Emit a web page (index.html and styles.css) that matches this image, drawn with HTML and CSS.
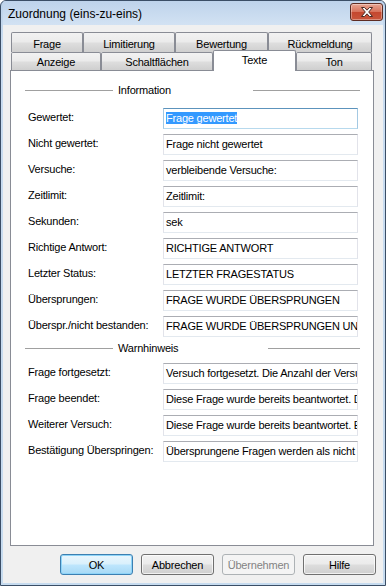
FILE: index.html
```html
<!DOCTYPE html>
<html lang="de">
<head>
<meta charset="utf-8">
<title>Zuordnung (eins-zu-eins)</title>
<link rel="stylesheet" href="styles.css">
</head>
<body>
<div class="window">
  <div class="titlebar">
    <span class="title">Zuordnung (eins-zu-eins)</span>
    <div class="close">
      <svg width="14" height="10" viewBox="0 0 14 10">
        <path d="M1.5 0.5 H4.5 L7 3.2 L9.5 0.5 H12.5 L8.7 5 L12.5 9.5 H9.5 L7 6.8 L4.5 9.5 H1.5 L5.3 5 Z" fill="#ffffff" stroke="#4a2a24" stroke-width="1" stroke-linejoin="round"/>
      </svg>
    </div>
  </div>
  <div class="body">
    <div class="tabs">
      <div class="tabrow back">
        <div class="tab t-frage">Frage</div>
        <div class="tab t-limit">Limitierung</div>
        <div class="tab t-bew">Bewertung</div>
        <div class="tab t-rueck">Rückmeldung</div>
      </div>
      <div class="tabrow front">
        <div class="tab t-anz">Anzeige</div>
        <div class="tab t-schalt">Schaltflächen</div>
        <div class="tab t-texte active">Texte</div>
        <div class="tab t-ton">Ton</div>
      </div>
    </div>
    <div class="panel">
      <div class="group g-info"><span class="gline first"></span><span class="gtext">Information</span><span class="gline"></span></div>
      <div class="rows">
        <div class="row"><span class="label">Gewertet:</span><div class="field focus"><span class="sel">Frage gewertet</span></div></div>
        <div class="row"><span class="label">Nicht gewertet:</span><div class="field">Frage nicht gewertet</div></div>
        <div class="row"><span class="label">Versuche:</span><div class="field">verbleibende Versuche:</div></div>
        <div class="row"><span class="label">Zeitlimit:</span><div class="field">Zeitlimit:</div></div>
        <div class="row"><span class="label">Sekunden:</span><div class="field">sek</div></div>
        <div class="row"><span class="label">Richtige Antwort:</span><div class="field">RICHTIGE ANTWORT</div></div>
        <div class="row"><span class="label">Letzter Status:</span><div class="field">LETZTER FRAGESTATUS</div></div>
        <div class="row"><span class="label">Übersprungen:</span><div class="field">FRAGE WURDE ÜBERSPRUNGEN</div></div>
        <div class="row"><span class="label">Überspr./nicht bestanden:</span><div class="field">FRAGE WURDE ÜBERSPRUNGEN UND NICHT BESTANDEN</div></div>
      </div>
      <div class="group g-warn"><span class="gline first"></span><span class="gtext">Warnhinweis</span><span class="gline"></span></div>
      <div class="rows">
        <div class="row"><span class="label">Frage fortgesetzt:</span><div class="field">Versuch fortgesetzt. Die Anzahl der Versuche wurde erhöht.</div></div>
        <div class="row"><span class="label">Frage beendet:</span><div class="field">Diese Frage wurde bereits beantwortet. Die Antwort kann nicht geändert werden.</div></div>
        <div class="row"><span class="label">Weiterer Versuch:</span><div class="field">Diese Frage wurde bereits beantwortet. Ein weiterer Versuch ist möglich.</div></div>
        <div class="row"><span class="label">Bestätigung Überspringen:</span><div class="field">Übersprungene Fragen werden als nicht beantwortet gewertet.</div></div>
      </div>
    </div>
    <div class="buttons">
      <div class="btn default">OK</div>
      <div class="btn">Abbrechen</div>
      <div class="btn disabled">Übernehmen</div>
      <div class="btn">Hilfe</div>
    </div>
  </div>
</div>
</body>
</html>
```

FILE: styles.css
```css
* { box-sizing: border-box; }
html, body { margin: 0; padding: 0; background: #ffffff; }
body { font-family: "Liberation Sans", Arial, sans-serif; font-size: 11px; letter-spacing: -0.2px; color: #000; }

.window {
  width: 386px;
  height: 586px;
  display: flex;
  flex-direction: column;
  border: 1px solid #3b4e66;
  border-radius: 6px 6px 0 0;
  background: linear-gradient(#bcd2ea, #c9dcf0 40px, #c6dbef);
  padding: 0 2px 2px 2px;
  overflow: hidden;
}

.titlebar {
  height: 24px;
  display: flex;
  align-items: center;
  justify-content: space-between;
  padding: 0 0 0 5px;
  background: linear-gradient(#bed3eb, #d2e2f3);
}
.title {
  font-family: "Liberation Sans", Arial, sans-serif;
  font-size: 12px;
  letter-spacing: 0;
  color: #000;
  padding-top: 1px;
}
.close {
  width: 33px;
  height: 18px;
  margin-top: -2px;
  border: 1px solid #5e2c23;
  border-radius: 3px;
  background: linear-gradient(#e7a593, #d7735c 48%, #c4472f 52%, #c9563c);
  display: flex;
  align-items: center;
  justify-content: center;
  box-shadow: inset 0 0 0 1px rgba(255,255,255,0.35);
}

.body {
  flex: 1;
  background: #f0f0f0;
  display: flex;
  flex-direction: column;
  padding: 7px 7px 8px 7px;
}

.tabs { padding-left: 1px; }
.tabrow { display: flex; align-items: flex-end; }
.tabrow.back { height: 20px; }
.tabrow.front { height: 18px; }
.tab {
  height: 100%;
  border: 1px solid #898c95;
  border-bottom: none;
  border-radius: 2px 2px 0 0;
  background: linear-gradient(#f2f2f2, #ebebeb 45%, #dddddd 55%, #cfcfcf);
  display: flex;
  align-items: center;
  justify-content: center;
  font-size: 11px;
  padding-top: 1px;
}
.tabrow.back .tab { padding-top: 2px; }
.tab.active {
  background: #ffffff;
  height: 21px;
  margin-bottom: -1px;
  position: relative;
  z-index: 1;
  align-items: flex-start;
  padding-top: 3px;
}
.t-frage { width: 72px; }
.t-limit { width: 92px; }
.t-bew { width: 93px; }
.t-rueck { width: 104px; }
.t-anz { width: 90px; }
.t-schalt { width: 112px; }
.t-texte { width: 83px; }
.t-ton { width: 76px; }

.panel {
  flex: 1;
  background: #ffffff;
  border: 1px solid #898c95;
  margin-right: 2px;
  padding: 0 13px 0 14px;
  display: flex;
  flex-direction: column;
}

.group {
  display: flex;
  align-items: center;
  height: 14px;
}
.g-info { margin-top: 12px; margin-bottom: 11px; }
.g-warn { margin-top: 4px; margin-bottom: 8px; }
.gline { flex: 1; height: 1px; background: #a0a0a0; }
.gline.first { flex: 0 0 88px; }
.gtext { padding-left: 5px; }
.g-info .gtext { width: 140px; }
.g-warn .gtext { width: 155px; }

.rows { display: flex; flex-direction: column; gap: 5px; padding: 0 2px 0 3px; }
.row { display: flex; align-items: center; height: 21px; }
.label { width: 135px; flex: 0 0 135px; margin-top: -3px; white-space: nowrap; }
.field {
  flex: 1;
  height: 21px;
  border: 1px solid #e2e3ea;
  border-top-color: #abadb3;
  border-bottom-color: #e3e9ef;
  padding: 0 2px;
  line-height: 19px;
  white-space: nowrap;
  overflow: hidden;
  background: #fff;
}
.field.focus {
  border-color: #a4c9e3;
  border-top-color: #5c93bc;
  border-bottom-color: #b7d9ed;
}
.sel { background: #3399ff; color: #fff; }

.buttons {
  display: flex;
  justify-content: flex-end;
  gap: 8px;
  margin-top: 8px;
}
.btn {
  width: 73px;
  height: 21px;
  border: 1px solid #707070;
  border-radius: 3px;
  background: linear-gradient(#f2f2f2, #ebebeb 48%, #dddddd 52%, #cfcfcf);
  box-shadow: inset 0 0 0 1px rgba(255,255,255,0.7);
  display: flex;
  align-items: center;
  justify-content: center;
  font-size: 11px;
}
.btn.default {
  border-color: #3c7fb1;
  background: linear-gradient(#eaf6fd, #d9f0fc 48%, #bee6fd 52%, #a7d9f5);
  box-shadow: inset 0 0 0 1px #8ed4f8;
}
.btn.disabled {
  border-color: #adb2b5;
  background: #f4f4f4;
  color: #838383;
  box-shadow: none;
}
```
